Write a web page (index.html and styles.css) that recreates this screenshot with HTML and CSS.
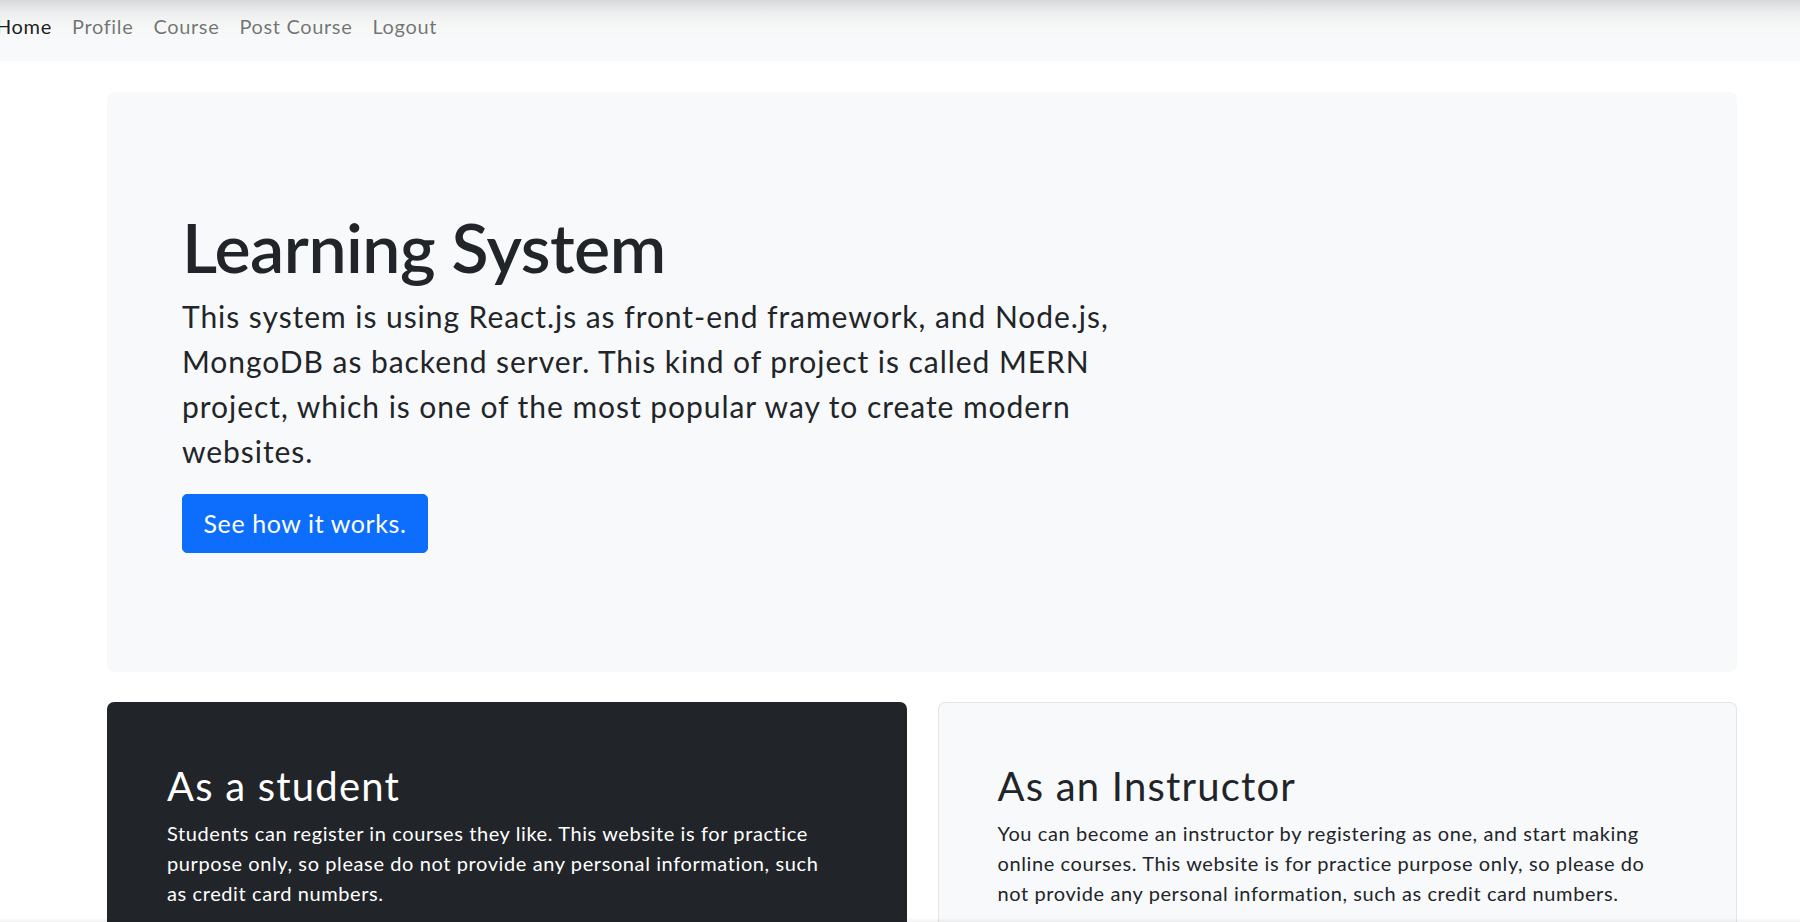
FILE: index.html
```html
<!DOCTYPE html>
<html lang="en">
<head>
<meta charset="utf-8">
<title>Learning System</title>
<link rel="stylesheet" href="styles.css">
</head>
<body>
<nav class="navbar">
  <ul class="nav-list">
    <li><a class="nav-link active" href="#">Home</a></li>
    <li><a class="nav-link" href="#">Profile</a></li>
    <li><a class="nav-link" href="#">Course</a></li>
    <li><a class="nav-link" href="#">Post Course</a></li>
    <li><a class="nav-link" href="#">Logout</a></li>
  </ul>
</nav>
<main class="container">
  <section class="jumbotron">
    <h1 class="display-title">Learning System</h1>
    <p class="lead-text">This system is using React.js as front-end framework, and Node.js, MongoDB as backend server. This kind of project is called MERN project, which is one of the most popular way to create modern websites.</p>
    <button class="btn-primary" type="button">See how it works.</button>
  </section>
  <div class="card-row">
    <section class="feature-card dark">
      <h2 class="card-title">As a student</h2>
      <p class="card-text">Students can register in courses they like. This website is for practice purpose only, so please do not provide any personal information, such as credit card numbers.</p>
    </section>
    <section class="feature-card light">
      <h2 class="card-title">As an Instructor</h2>
      <p class="card-text">You can become an instructor by registering as one, and start making online courses. This website is for practice purpose only, so please do not provide any personal information, such as credit card numbers.</p>
    </section>
  </div>
</main>
<div class="bottom-shade"></div>
</body>
</html>
```
FILE: styles.css
```css
* { box-sizing: border-box; }
html, body {
  margin: 0;
  padding: 0;
  height: 100%;
  overflow: hidden;
}
body {
  font-family: "Lato", "Noto Sans", sans-serif;
  color: #212529;
  background: #ffffff;
  letter-spacing: 0.03em;
}
.navbar {
  height: 61px;
  background: linear-gradient(to bottom, #d7d8da 0px, #eceded 12px, #f5f6f6 24px, #f8f9fa 40px, #f8f9fa 100%);
  display: flex;
  align-items: flex-start;
}
.nav-list {
  list-style: none;
  margin: 0 0 0 -14px;
  padding: 0;
  display: flex;
}
.nav-link {
  display: block;
  padding: 11px 10px 10px;
  font-size: 20px;
  line-height: 30px;
  letter-spacing: 0.65px;
  color: rgba(0, 0, 0, 0.55);
  text-decoration: none;
}
.nav-link.active { color: rgba(0, 0, 0, 0.9); }
.container {
  width: 1630px;
  margin: 31px 0 0 107px;
}
.jumbotron {
  background: #f8f9fa;
  border-radius: 7px;
  padding: 120px 75px 119px 75px;
  margin-bottom: 30px;
}
.display-title {
  font-size: 68px;
  font-weight: 600;
  line-height: 70px;
  margin: 0 0 12px 0;
  letter-spacing: -0.5px;
}
.lead-text {
  width: 990px;
  font-size: 30px;
  line-height: 45px;
  margin: 0 0 20px 0;
  letter-spacing: 0.95px;
}
.btn-primary {
  font-family: inherit;
  font-size: 25px;
  line-height: 37px;
  letter-spacing: 0.6px;
  padding: 10px 18px;
  color: #ffffff;
  background: #0d6efd;
  border: 1px solid #0d6efd;
  border-radius: 5px;
  cursor: pointer;
  width: 246px;
  height: 59px;
}
.card-row {
  display: flex;
  gap: 31px;
}
.feature-card {
  flex: 1 1 0;
  height: 230px;
  border-radius: 7px 7px 0 0;
  padding: 60px;
}
.feature-card.dark {
  background: #212529;
  color: #ffffff;
}
.feature-card.light {
  background: #f8f9fa;
  border: 1px solid #e3e5e7;
  border-bottom: none;
  padding: 59px;
}
.card-title {
  font-size: 40px;
  font-weight: 400;
  line-height: 48px;
  margin: 0 0 8px 0;
  letter-spacing: 1.2px;
}
.card-text {
  font-size: 20px;
  line-height: 30px;
  margin: 0;
  max-width: 672px;
  letter-spacing: 0.6px;
}
.bottom-shade {
  position: fixed;
  left: 0;
  right: 0;
  bottom: 0;
  height: 4px;
  background: linear-gradient(to bottom, rgba(0, 0, 0, 0), rgba(0, 0, 0, 0.06));
  pointer-events: none;
}
```
